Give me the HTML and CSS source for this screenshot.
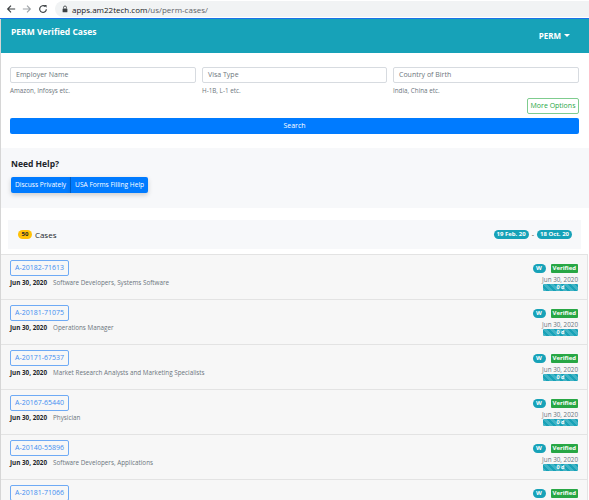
FILE: index.html
```html
<!DOCTYPE html>
<html lang="en">
<head>
<meta charset="utf-8">
<title>PERM Verified Cases</title>
<link rel="stylesheet" href="styles.css">
</head>
<body>
<div class="chrome">
  <div class="nav-icons">
    <svg class="ic" viewBox="0 0 12 12" width="10" height="10"><path d="M11 6H2M6 2L2 6l4 4" fill="none" stroke="#3c4043" stroke-width="1.4"/></svg>
    <svg class="ic" viewBox="0 0 12 12" width="10" height="10"><path d="M1 6h9M6 2l4 4-4 4" fill="none" stroke="#a0a4a8" stroke-width="1.4"/></svg>
    <svg class="ic" viewBox="0 0 12 12" width="10" height="10"><path d="M10 6.2A4 4 0 1 1 8.6 3" fill="none" stroke="#3c4043" stroke-width="1.4"/><path d="M7 1.2h3.3v3.3z" fill="#3c4043"/></svg>
  </div>
  <div class="omnibox">
    <svg viewBox="0 0 10 12" width="6" height="8"><path d="M2.5 5V3.5a2.5 2.5 0 0 1 5 0V5" fill="none" stroke="#3c4043" stroke-width="1.4"/><rect x="1" y="5" width="8" height="6.5" rx="1" fill="#3c4043"/></svg>
    <span class="url"><span class="host">apps.am22tech.com</span><span class="path">/us/perm-cases/</span></span>
  </div>
</div>
<div class="loadbar"></div>
<div class="page">
  <header class="topbar">
    <div class="brand">PERM Verified Cases</div>
    <div class="menu">PERM <span class="caret"></span></div>
  </header>

  <section class="search">
    <div class="fields">
      <div class="field">
        <div class="input">Employer Name</div>
        <div class="help">Amazon, Infosys etc.</div>
      </div>
      <div class="field">
        <div class="input">Visa Type</div>
        <div class="help">H-1B, L-1 etc.</div>
      </div>
      <div class="field">
        <div class="input">Country of Birth</div>
        <div class="help">India, China etc.</div>
      </div>
    </div>
    <div class="more-row"><span class="btn-outline-green">More Options</span></div>
    <div class="btn-search">Search</div>
  </section>

  <section class="needhelp">
    <div class="nh-title">Need Help?</div>
    <div class="btn-group">
      <span class="btn-blue">Discuss Privately</span><span class="btn-blue">USA Forms Filling Help</span>
    </div>
  </section>

  <section class="cases-head">
    <div class="count"><span class="badge-yellow">50</span> Cases</div>
    <div class="range"><span class="pill-teal">19 Feb. 20</span><span class="dash">-</span><span class="pill-teal">18 Oct. 20</span></div>
  </section>

  <ul class="rows">
    <li class="row">
      <div class="left"><span class="case-id">A-20182-71613</span><div class="meta"><b>Jun 30, 2020</b><span class="job">Software Developers, Systems Software</span></div></div>
      <div class="right"><div class="badges"><span class="w">W</span><span class="ver">Verified</span></div><div class="rdate">Jun 30, 2020</div><div class="bar">0 d</div></div>
    </li>
    <li class="row">
      <div class="left"><span class="case-id">A-20181-71075</span><div class="meta"><b>Jun 30, 2020</b><span class="job">Operations Manager</span></div></div>
      <div class="right"><div class="badges"><span class="w">W</span><span class="ver">Verified</span></div><div class="rdate">Jun 30, 2020</div><div class="bar">0 d</div></div>
    </li>
    <li class="row">
      <div class="left"><span class="case-id">A-20171-67537</span><div class="meta"><b>Jun 30, 2020</b><span class="job">Market Research Analysts and Marketing Specialists</span></div></div>
      <div class="right"><div class="badges"><span class="w">W</span><span class="ver">Verified</span></div><div class="rdate">Jun 30, 2020</div><div class="bar">0 d</div></div>
    </li>
    <li class="row">
      <div class="left"><span class="case-id">A-20167-65440</span><div class="meta"><b>Jun 30, 2020</b><span class="job">Physician</span></div></div>
      <div class="right"><div class="badges"><span class="w">W</span><span class="ver">Verified</span></div><div class="rdate">Jun 30, 2020</div><div class="bar">0 d</div></div>
    </li>
    <li class="row">
      <div class="left"><span class="case-id">A-20140-55896</span><div class="meta"><b>Jun 30, 2020</b><span class="job">Software Developers, Applications</span></div></div>
      <div class="right"><div class="badges"><span class="w">W</span><span class="ver">Verified</span></div><div class="rdate">Jun 30, 2020</div><div class="bar">0 d</div></div>
    </li>
    <li class="row">
      <div class="left"><span class="case-id">A-20181-71066</span><div class="meta"><b>Jun 30, 2020</b><span class="job">Software Developers, Applications</span></div></div>
      <div class="right"><div class="badges"><span class="w">W</span><span class="ver">Verified</span></div><div class="rdate">Jun 30, 2020</div><div class="bar">0 d</div></div>
    </li>
  </ul>
</div>
</body>
</html>
```

FILE: styles.css
```css
* { box-sizing: border-box; }
html, body { margin: 0; padding: 0; }
body {
  width: 589px;
  height: 500px;
  overflow: hidden;
  background: #fff;
  font-family: "Open Sans", "Noto Sans", "Liberation Sans", sans-serif;
  color: #212529;
}

.chrome {
  height: 18px;
  display: flex;
  align-items: center;
  background: #fff;
}
.nav-icons {
  display: flex;
  align-items: center;
  gap: 6px;
  padding-left: 6px;
  width: 55px;
}
.omnibox {
  flex: 1;
  height: 16px;
  background: #f1f3f4;
  border-radius: 8px 0 0 8px;
  display: flex;
  align-items: center;
  gap: 4px;
  padding-left: 7px;
  font-size: 8px;
}
.url .host { color: #202124; }
.url .path { color: #5f6368; }
.loadbar { height: 1px; background: #1a73e8; }

.page {
  border-left: 1px solid #d6d6d6;
}

.topbar {
  height: 34px;
  background: #17a2b8;
  color: #fff;
  display: flex;
  justify-content: space-between;
  padding: 7px 19px 0 10px;
}
.brand { font-size: 8.5px; font-weight: 700; line-height: 11px; }
.menu { font-size: 8px; font-weight: 700; padding-top: 4px; display: flex; align-items: center; gap: 3px; line-height: 11px; height: 15px; }
.caret {
  width: 0; height: 0;
  border-left: 3px solid transparent;
  border-right: 3px solid transparent;
  border-top: 3px solid #fff;
}

.search { padding: 14px 10px 14px 9px; }
.fields {
  display: grid;
  grid-template-columns: 186px 185px 186px;
  gap: 6px;
}
.input {
  height: 16px;
  border: 1px solid #d7dbe0;
  border-radius: 2px;
  font-size: 7px;
  color: #6c757d;
  padding: 0 5px;
  line-height: 14px;
}
.help { font-size: 6.3px; color: #6c757d; margin-top: 3px; line-height: 9px; }
.more-row { display: flex; justify-content: flex-end; margin-top: 3px; }
.btn-outline-green {
  display: inline-block;
  height: 16px;
  width: 52px;
  text-align: center;
  border: 1px solid #7fcc8f;
  border-radius: 2px;
  color: #28a745;
  font-size: 7px;
  line-height: 14px;
}
.btn-search {
  margin-top: 4px;
  height: 16px;
  background: #007bff;
  color: #fff;
  border-radius: 2px;
  font-size: 7px;
  line-height: 16px;
  text-align: center;
}

.needhelp {
  background: #f7f8fa;
  height: 60px;
  padding: 11px 10px 0;
}
.nh-title { font-size: 8.5px; font-weight: 700; line-height: 10px; }
.btn-group { display: flex; margin-top: 8px; }
.btn-blue {
  height: 16px;
  background: #007bff;
  color: #fff;
  font-size: 6.6px;
  line-height: 16px;
  padding: 0 4px;
  box-shadow: 0 2px 5px rgba(0,0,0,0.18);
}
.btn-blue:first-child { border-radius: 2px 0 0 2px; border-right: 1px solid #0062cc; }
.btn-blue:last-child { border-radius: 0 2px 2px 0; }

.cases-head {
  margin: 12px 8px 5px 7px;
  height: 29px;
  background: #f7f8fa;
  display: flex;
  justify-content: space-between;
  align-items: center;
  padding: 0 9px 0 10px;
}
.count { font-size: 8px; display: flex; align-items: center; gap: 3px; }
.badge-yellow {
  background: #ffc107;
  border-radius: 5px;
  font-size: 6px;
  font-weight: 700;
  padding: 0 3.5px;
  height: 9px;
  line-height: 9px;
}
.range { display: flex; align-items: center; gap: 2px; }
.dash { font-size: 7px; color: #333; padding: 0 1px; }
.pill-teal {
  background: #17a2b8;
  color: #fff;
  font-size: 6px;
  font-weight: 700;
  border-radius: 5px;
  height: 9px;
  line-height: 9px;
  padding: 0 3px;
}

.rows { list-style: none; margin: 0; padding: 0; border-right: 1px solid #e3e3e3; margin-right: 1px; }
.row {
  height: 45px;
  background: #f7f7f7;
  border-top: 1px solid #e3e3e3;
  display: flex;
  justify-content: space-between;
  padding: 5px 9px 0 9px;
}
.left { display: flex; flex-direction: column; align-items: flex-start; }
.case-id {
  display: block;
  height: 16px;
  border: 1px solid #6eaaf5;
  border-radius: 2px;
  color: #3f8ef0;
  font-size: 7px;
  line-height: 14px;
  padding: 0 4px;
}
.meta { font-size: 6.3px; margin-top: 3px; display: flex; gap: 6px; line-height: 8px; }
.meta b { color: #212529; }
.job { color: #6c757d; }
.right { display: flex; flex-direction: column; align-items: flex-end; padding-top: 4px; }
.badges { display: flex; gap: 5px; align-items: center; }
.w {
  background: #17a2b8;
  color: #fff;
  font-size: 6px;
  font-weight: 700;
  border-radius: 5px;
  width: 13px;
  height: 9px;
  line-height: 9px;
  text-align: center;
}
.ver {
  background: #28a745;
  color: #fff;
  font-size: 6px;
  font-weight: 700;
  border-radius: 1px;
  height: 9px;
  line-height: 9px;
  padding: 0 2px;
}
.rdate { font-size: 6.3px; color: #6c757d; margin-top: 3px; line-height: 8px; }
.bar {
  width: 35px;
  height: 7px;
  line-height: 7px;
  text-align: center;
  font-size: 5.5px;
  font-weight: 700;
  color: #fff;
  border-radius: 1px;
  background-color: #17a2b8;
  background-image: linear-gradient(45deg, rgba(255,255,255,.18) 25%, transparent 25%, transparent 50%, rgba(255,255,255,.18) 50%, rgba(255,255,255,.18) 75%, transparent 75%, transparent);
  background-size: 7px 7px;
}
```
